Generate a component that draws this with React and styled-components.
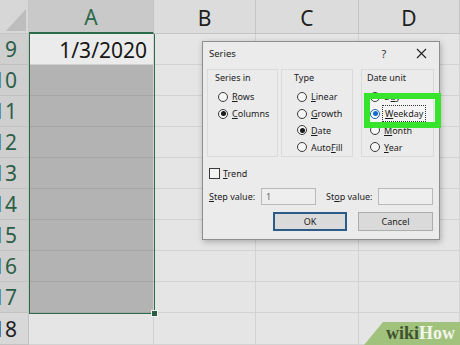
import React from 'react'
import styled, { createGlobalStyle } from 'styled-components';

const GlobalStyle = createGlobalStyle`
  html, body {
    margin: 0;
    padding: 0;
    width: 460px;
    height: 345px;
    overflow: hidden;
    background: #e5e5e5;
    font-family: "Noto Sans", "Liberation Sans", sans-serif;
  }
`;

const ROWS = [9, 10, 11, 12, 13, 14, 15, 16, 17, 18];
const COLS = ['A', 'B', 'C', 'D'];

const App = () => {
  return (
    <>
      <GlobalStyle />
      <Screen>
        <Sheet>
          <Corner><span className="tri" /></Corner>
          {COLS.map((c) => (
            <ColHeader key={c} $selected={c === 'A'}>{c}</ColHeader>
          ))}
          {ROWS.map((r) => (
            <React.Fragment key={r}>
              <RowHeader $selected={r < 18}>{r}</RowHeader>
              {COLS.map((c) => (
                <Cell
                  key={c}
                  $kind={c === 'A' ? (r === 9 ? 'active' : r < 18 ? 'selected' : 'plain') : 'plain'}
                >
                  {c === 'A' && r === 9 ? '1/3/2020' : ''}
                </Cell>
              ))}
            </React.Fragment>
          ))}
        </Sheet>

        <Selection>
          <span className="handle" />
        </Selection>

        <Dialog>
          <TitleBar>
            <Title>Series</Title>
            <Help>?</Help>
            <Close>
              <svg width="11" height="11" viewBox="0 0 11 11">
                <path d="M1 1 L10 10 M10 1 L1 10" stroke="#222" strokeWidth="1.1" fill="none" />
              </svg>
            </Close>
          </TitleBar>

          <Groups>
            <Group $w={71} $ml={4} $pl={7}>
              <GroupLabel>Series in</GroupLabel>
              <RadioList>
                <RadioRow><Radio /><span><Mn>R</Mn>ows</span></RadioRow>
                <RadioRow><Radio $checked /><span><Mn>C</Mn>olumns</span></RadioRow>
              </RadioList>
            </Group>
            <Group $w={72} $ml={3} $pl={12}>
              <GroupLabel>Type</GroupLabel>
              <RadioList>
                <RadioRow><Radio /><span><Mn>L</Mn>inear</span></RadioRow>
                <RadioRow><Radio /><span><Mn>G</Mn>rowth</span></RadioRow>
                <RadioRow><Radio $checked /><span><Mn>D</Mn>ate</span></RadioRow>
                <RadioRow><Radio /><span>Auto<Mn>F</Mn>ill</span></RadioRow>
              </RadioList>
            </Group>
            <Group $w={73} $ml={8} $pl={5}>
              <GroupLabel>Date unit</GroupLabel>
              <RadioList>
                <RadioRow><Radio /><span>D<Mn>a</Mn>y</span></RadioRow>
                <RadioRow><Radio $checked $blue /><Focus><Mn>W</Mn>eekday</Focus></RadioRow>
                <RadioRow><Radio /><span><Mn>M</Mn>onth</span></RadioRow>
                <RadioRow><Radio /><span><Mn>Y</Mn>ear</span></RadioRow>
              </RadioList>
            </Group>
          </Groups>

          <TrendRow>
            <Check />
            <span><Mn>T</Mn>rend</span>
          </TrendRow>

          <ValueRow>
            <ValueLabel><Mn>S</Mn>tep value:</ValueLabel>
            <Field>1</Field>
            <ValueLabel $ml={10}>St<Mn>o</Mn>p value:</ValueLabel>
            <Field />
          </ValueRow>

          <ButtonRow>
            <Button $w={74} $primary>OK</Button>
            <Button $w={75}>Cancel</Button>
          </ButtonRow>

          <Highlight />
        </Dialog>

        <Badge>
          <span className="wiki">wiki</span><span className="how">How</span>
        </Badge>
      </Screen>
    </>
  )
}

const Screen = styled.div`
  position: relative;
  width: 460px;
  height: 345px;
  overflow: hidden;
  background: #e5e5e5;
`;

const Sheet = styled.div`
  display: grid;
  grid-template-columns: 29px 125px 102px 103px 101px;
  grid-template-rows: 34px repeat(9, 31px) 32px;
`;

const Corner = styled.div`
  position: relative;
  background: #d7d7d7;
  border-right: 1px solid #c6c6c6;
  border-bottom: 1px solid #c6c6c6;
  box-sizing: border-box;
  .tri{
    position: absolute;
    right: 2px;
    bottom: 2px;
    width: 0;
    height: 0;
    border-left: 20px solid transparent;
    border-bottom: 22px solid #bdbdbd;
  }
`;

const ColHeader = styled.div`
  display: flex;
  align-items: center;
  justify-content: center;
  box-sizing: border-box;
  padding-top: 2px;
  background: ${({ $selected }) => ($selected ? '#c9c9c9' : '#dcdcdc')};
  color: ${({ $selected }) => ($selected ? '#2b6a48' : '#1e1e1e')};
  border-right: 1px solid #c4c4c4;
  border-bottom: ${({ $selected }) => ($selected ? '2px solid #2a6b49' : '1px solid #c4c4c4')};
  font-size: 21px;
`;

const RowHeader = styled.div`
  box-sizing: border-box;
  display: flex;
  align-items: center;
  justify-content: flex-end;
  padding-right: 11px;
  white-space: nowrap;
  overflow: hidden;
  background: ${({ $selected }) => ($selected ? '#cfcfcf' : '#d8d8d8')};
  color: ${({ $selected }) => ($selected ? '#2d5e46' : '#1e1e1e')};
  border-right: 1px solid #c2c2c2;
  border-bottom: 1px solid #c2c2c2;
  font-size: 21px;
`;

const cellBg = { active: '#ebebeb', selected: '#b3b3b3', plain: '#e5e5e5' };
const cellLine = { active: '#d0d0d0', selected: '#a7a7a7', plain: '#d2d2d2' };

const Cell = styled.div`
  box-sizing: border-box;
  display: flex;
  align-items: center;
  justify-content: flex-end;
  padding: 2px 6px 0 0;
  background: ${({ $kind }) => cellBg[$kind]};
  border-right: 1px solid #d2d2d2;
  border-bottom: 1px solid ${({ $kind }) => cellLine[$kind]};
  color: #161616;
  font-size: 21px;
`;

const Selection = styled.div`
  position: absolute;
  left: 29px;
  top: 34px;
  width: 126px;
  height: 280px;
  box-sizing: border-box;
  border: 1px solid #2c6a4a;
  border-top: none;
  pointer-events: none;
  .handle{
    position: absolute;
    right: -3px;
    bottom: -3px;
    width: 5px;
    height: 5px;
    background: #2a5e43;
    outline: 1px solid #f2f2f2;
  }
`;

const Dialog = styled.div`
  position: absolute;
  left: 202px;
  top: 41px;
  width: 238px;
  height: 199px;
  box-sizing: border-box;
  display: flex;
  flex-direction: column;
  background: #ebebeb;
  border: 1px solid #8e8e8e;
  box-shadow: 1px 2px 6px rgba(0, 0, 0, 0.25);
  color: #1b1b1b;
  font-size: 9px;
`;

const TitleBar = styled.div`
  height: 23px;
  display: flex;
  align-items: center;
  padding: 0 7px 0 6px;
`;

const Title = styled.span`
  flex: 1;
  font-size: 9.5px;
`;

const Help = styled.span`
  width: 20px;
  text-align: center;
  font-size: 11px;
  margin-right: 16px;
  color: #333;
`;

const Close = styled.span`
  width: 22px;
  display: flex;
  justify-content: center;
`;

const Groups = styled.div`
  display: flex;
  margin-top: 4px;
`;

const Group = styled.div`
  width: ${({ $w }) => $w}px;
  margin-left: ${({ $ml }) => $ml}px;
  height: 88px;
  box-sizing: border-box;
  padding: 2px 0 0 ${({ $pl }) => $pl}px;
  border: 1px solid #dadada;
`;

const GroupLabel = styled.div`
  height: 12px;
  line-height: 12px;
`;

const RadioList = styled.div`
  margin-top: 4.6px;
  padding-left: 3px;
  display: flex;
  flex-direction: column;
`;

const RadioRow = styled.div`
  height: 16.7px;
  display: flex;
  align-items: center;
  gap: 4px;
  white-space: nowrap;
`;

const Radio = styled.span`
  position: relative;
  width: 10px;
  height: 10px;
  flex: none;
  box-sizing: border-box;
  border-radius: 50%;
  border: 1px solid ${({ $blue }) => ($blue ? '#1f5fa8' : '#3a3a3a')};
  background: #f6f6f6;
  &::after{
    content: '';
    display: ${({ $checked }) => ($checked ? 'block' : 'none')};
    position: absolute;
    left: 1.5px;
    top: 1.5px;
    width: 5px;
    height: 5px;
    border-radius: 50%;
    background: ${({ $blue }) => ($blue ? '#1168c4' : '#1a1a1a')};
  }
`;

const Mn = styled.span`
  text-decoration: underline;
  text-underline-offset: 1px;
`;

const Focus = styled.span`
  outline: 1px dotted #333;
  outline-offset: 1px;
  padding: 0 1px;
`;

const TrendRow = styled.div`
  display: flex;
  align-items: center;
  gap: 3px;
  margin: 11px 0 0 6px;
  height: 11px;
`;

const Check = styled.span`
  width: 11px;
  height: 11px;
  box-sizing: border-box;
  border: 1px solid #3a3a3a;
  background: #f4f4f4;
`;

const ValueRow = styled.div`
  display: flex;
  align-items: center;
  margin: 9px 0 0 6px;
  height: 17px;
`;

const ValueLabel = styled.span`
  width: 52px;
  margin-left: ${({ $ml }) => $ml || 0}px;
  white-space: nowrap;
`;

const Field = styled.span`
  width: 55px;
  height: 17px;
  box-sizing: border-box;
  display: flex;
  align-items: center;
  padding-left: 4px;
  background: #eeeeee;
  border: 1px solid #b9b9b9;
  color: #666;
`;

const ButtonRow = styled.div`
  display: flex;
  justify-content: flex-end;
  gap: 11px;
  margin-top: 7px;
  padding-right: 6px;
`;

const Button = styled.span`
  width: ${({ $w }) => $w}px;
  height: 19px;
  box-sizing: border-box;
  display: flex;
  align-items: center;
  justify-content: center;
  background: #dadada;
  border: ${({ $primary }) => ($primary ? '2px solid #2d5b88' : '1px solid #adadad')};
`;

const Highlight = styled.div`
  position: absolute;
  left: 161px;
  top: 51px;
  width: 77px;
  height: 35px;
  box-sizing: border-box;
  border: 6px solid #35e42b;
  backdrop-filter: brightness(1.04);
  pointer-events: none;
`;

const Badge = styled.div`
  position: absolute;
  right: 0;
  bottom: 0;
  width: 96px;
  height: 23px;
  display: flex;
  align-items: center;
  justify-content: flex-end;
  padding-right: 5px;
  box-sizing: border-box;
  background: #a1c27c;
  clip-path: polygon(19px 0, 100% 0, 100% 100%, 0 100%);
  font-family: "Liberation Serif", serif;
  font-weight: 700;
  font-size: 18px;
  .wiki{
    color: #3f5230;
  }
  .how{
    color: #f1f5ec;
  }
`;

export default App
